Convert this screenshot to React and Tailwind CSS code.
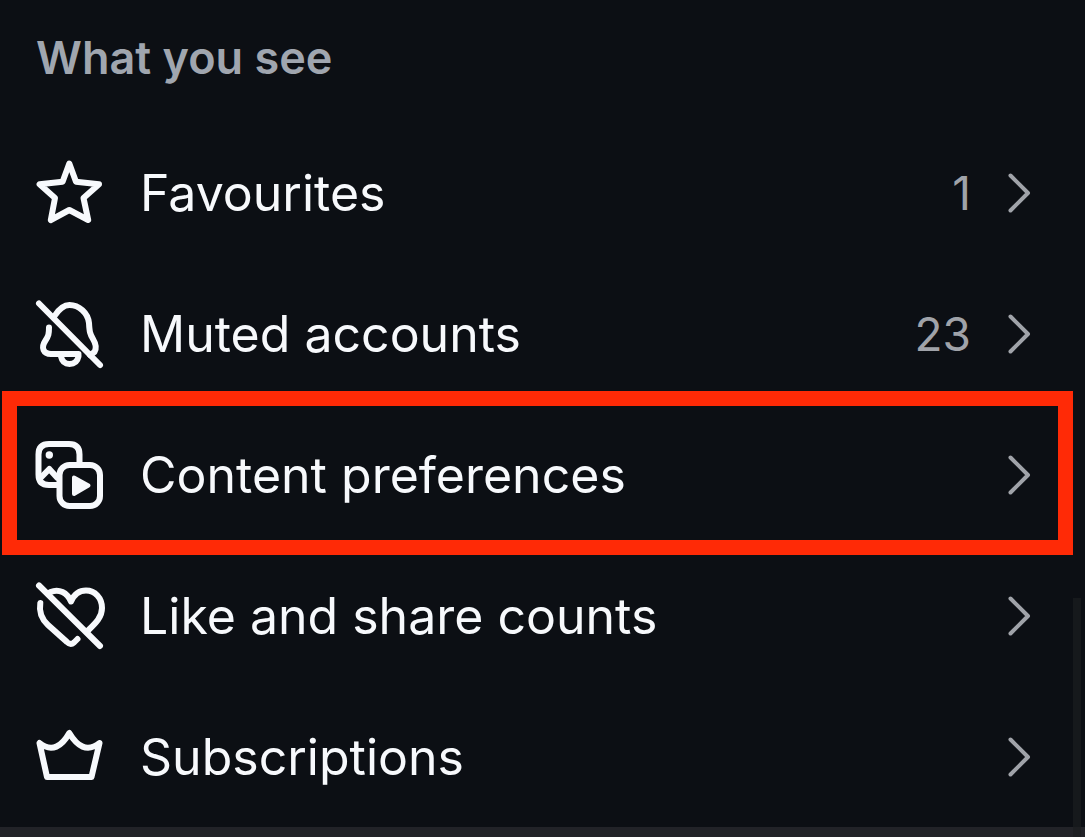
const ICON_PROPS = {
  viewBox: "0 0 72 72",
  fill: "none",
  stroke: "currentColor",
  strokeWidth: 6,
  strokeLinecap: "round",
  strokeLinejoin: "round",
  className: "size-[72px] shrink-0",
  "aria-hidden": true,
};

function StarIcon() {
  return (
    <svg {...ICON_PROPS}>
      <path d="M35.3 6.5 42 24.7 65 27.3 49.5 41 54.2 63 35.3 53 16.8 63 21 41 5.6 27.3 28.6 24.7Z" />
    </svg>
  );
}

function BellOffIcon() {
  return (
    <svg {...ICON_PROPS}>
      <path d="M5 5.5 66 67" />
      <path d="M20.5 18C25 11 30 7 35.5 7C45 7 54 15 55 25C55.5 34 56 36 59 41C62 46 63 50 60.5 54L56 57" />
      <path d="M15 29.5C15 36 14.500 38 11.500 42.500C6.500 50 9.500 56 17 56H44.5" />
      <path d="M27 58.5C28 63.5 31 66 35.5 66C40 66 43.5 63.5 44.5 58.5" />
    </svg>
  );
}

function MediaIcon() {
  return (
    <svg {...ICON_PROPS}>
      <path d="M23 46H15Q4.500 46 4.500 35.5V15.5Q4.500 5 15 5H35Q45.500 5 45.500 15.5V24" />
      <rect x="25.5" y="26" width="40.5" height="41" rx="10" />
      <path d="M6 39.500 15.300 30 23 38.500" />
      <circle cx="15.300" cy="16" r="3.700" fill="currentColor" stroke="none" />
      <path d="M40 38.500V55L54.500 46.500Z" fill="currentColor" strokeWidth="4" />
    </svg>
  );
}

function HeartOffIcon() {
  return (
    <svg {...ICON_PROPS}>
      <path d="M5 5.5 66 66" />
      <path d="M16.5 12C25 8.5 33 12.5 37 21.5C40.5 13.5 46 10.5 52 10.5C61 10.5 68 18 68 28C68 37 62 43 54 50.5" />
      <path d="M6.3 23C5 31 7.5 39 14 45L33 62Q36.5 65.5 40 62.5L43.5 59" />
    </svg>
  );
}

function CrownIcon() {
  return (
    <svg {...ICON_PROPS}>
      <path d="M5.5 22 13 56H57.5L65.5 22C53 32 43 25 35.3 12C28 25 18 32 5.5 22Z" />
    </svg>
  );
}

function Chevron() {
  return (
    <svg
      viewBox="0 0 24 42"
      fill="none"
      stroke="currentColor"
      strokeWidth="4"
      strokeLinecap="round"
      strokeLinejoin="round"
      className="h-[42px] w-6 shrink-0"
      aria-hidden
    >
      <path d="M3.500 3.500 21 21 3.500 38.500" />
    </svg>
  );
}

const ITEMS = [
  { label: "Favourites", icon: StarIcon, count: 1 },
  { label: "Muted accounts", icon: BellOffIcon, count: 23 },
  { label: "Content preferences", icon: MediaIcon, highlighted: true },
  { label: "Like and share counts", icon: HeartOffIcon },
  { label: "Subscriptions", icon: CrownIcon },
];

function SettingsRow({ label, icon: Icon, count, highlighted }) {
  return (
    <li className="relative">
      <button
        type="button"
        className="flex h-[141px] w-full items-center pr-[54px] pl-[34px] text-left text-[#f7f9fc]"
      >
        <Icon />
        <span className="ml-[34px] flex-1 text-[50px] leading-[60px]">
          {label}
        </span>
        <span className="flex items-center gap-9 text-[#a0a3a9]">
          {count !== undefined && (
            <span className="text-[46px] leading-[60px]">{count}</span>
          )}
          <Chevron />
        </span>
      </button>
      {highlighted && (
        <div className="pointer-events-none absolute -top-[13px] right-3 -bottom-[10px] left-[2px] border-[15px] border-[#ff2a06]" />
      )}
    </li>
  );
}

export default function App() {
  return (
    <main className="relative min-h-screen bg-[#0c0f14] font-['Inter',sans-serif]">
      <h2 className="h-[122px] px-9 pt-7 text-[45px] leading-[60px] font-semibold text-[#a0a6af]">
        What you see
      </h2>
      <ul>
        {ITEMS.map((item) => (
          <SettingsRow key={item.label} {...item} />
        ))}
      </ul>
      <div className="h-[10px] bg-[#222328]" />
      <div className="absolute right-1 bottom-0 h-[239px] w-2 bg-[#1b1e20]/70" />
    </main>
  );
}
